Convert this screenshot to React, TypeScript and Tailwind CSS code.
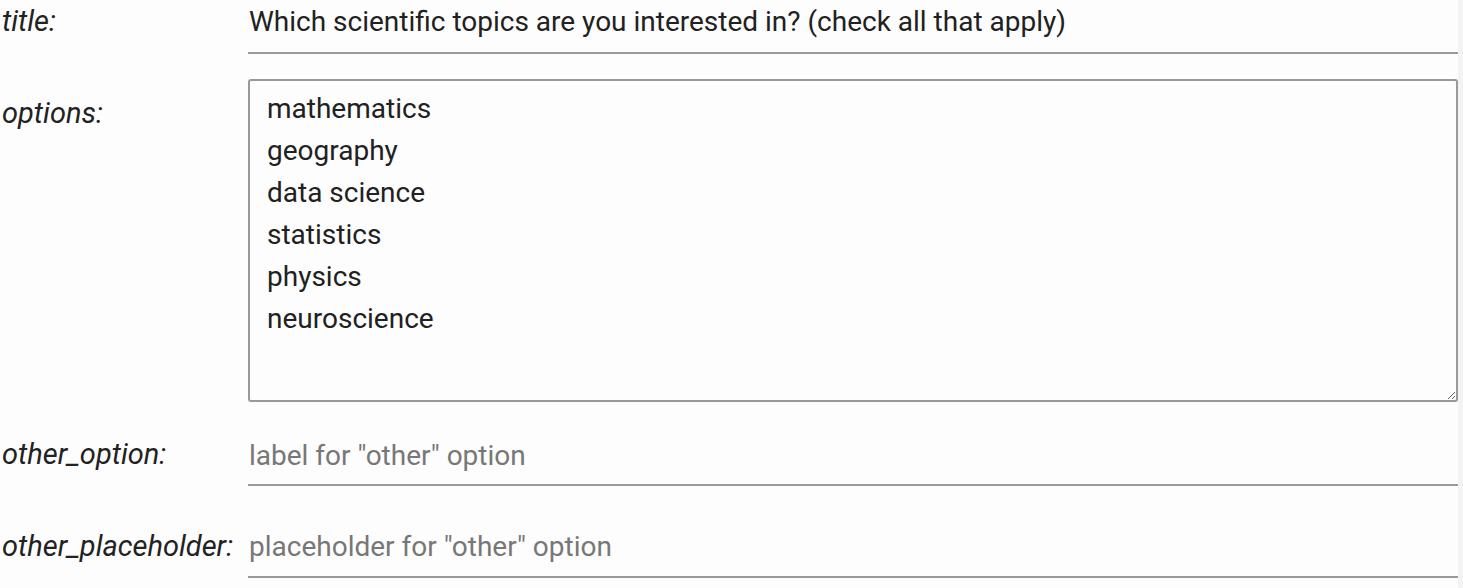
const options = [
  "mathematics",
  "geography",
  "data science",
  "statistics",
  "physics",
  "neuroscience",
];

function Label({ children, className = "" }: { children: React.ReactNode; className?: string }) {
  return <div className={"pl-[2px] text-[29px] italic text-[#222] " + className}>{children}</div>;
}

export default function App() {
  return (
    <div className="flex min-h-[588px] bg-[#fdfdfd] font-['Roboto',sans-serif] text-[28px] leading-[42px] text-[#212121]">
      <div className="w-[1458px] shrink-0">
        <div className="grid grid-cols-[248px_1fr]">
          <Label>title:</Label>
          <input
            readOnly
            value="Which scientific topics are you interested in? (check all that apply)"
            className="h-[54px] w-full border-b-2 border-[#999] bg-transparent pb-[10px] pl-[1px] text-[#212121] outline-none"
          />

          <Label className="mt-[25px] pt-[13px]">options:</Label>
          <textarea
            readOnly
            value={options.join("\n")}
            className="mt-[25px] h-[323px] w-full resize-y rounded-[3px] border-2 border-[#999] bg-transparent px-[17px] pt-[7px] leading-[42px] text-[#212121] outline-none"
          />

          <Label className="mt-[30px] pt-[1px]">other_option:</Label>
          <input
            readOnly
            placeholder={'label for "other" option'}
            className="mt-[30px] h-[54px] w-full border-b-2 border-[#999] bg-transparent pb-[6px] pl-[1px] outline-none placeholder:text-[#777]"
          />

          <Label className="mt-[38px] pt-[1px]">other_placeholder:</Label>
          <input
            readOnly
            placeholder={'placeholder for "other" option'}
            className="mt-[38px] h-[54px] w-full border-b-2 border-[#999] bg-transparent pb-[8px] pl-[1px] outline-none placeholder:text-[#777]"
          />
        </div>
      </div>
      <div className="flex-1 bg-[#f3f3f3]" />
    </div>
  );
}
